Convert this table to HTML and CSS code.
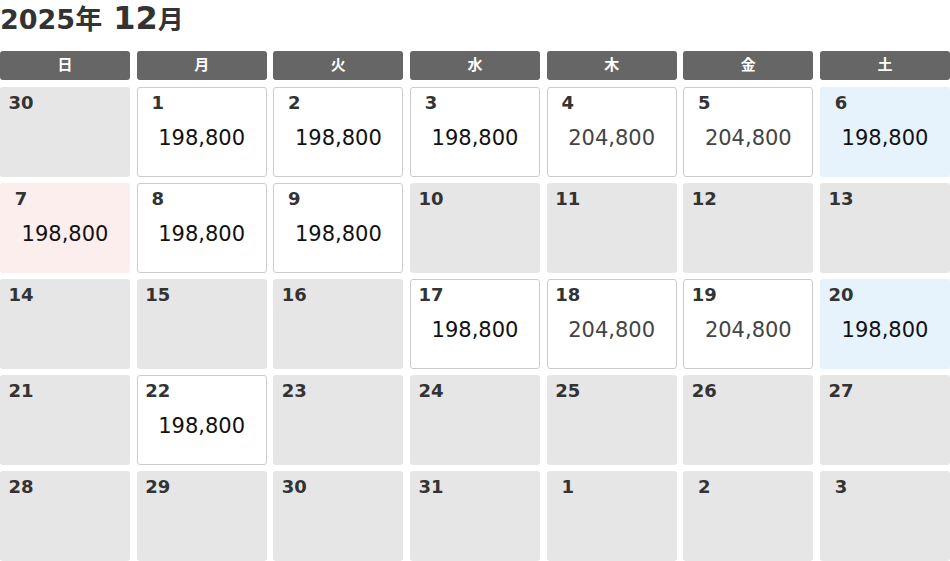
FILE: index.html
```html
<!DOCTYPE html>
<html lang="ja">
<head>
<meta charset="utf-8">
<title>2025年 12月</title>
<link rel="stylesheet" href="styles.css">
</head>
<body>
<div class="cal">
  <h1 class="title"><span class="year">2025年</span> <span class="month">12</span><span class="mon-unit">月</span></h1>
  <div class="grid">
    <div class="hd">日</div><div class="hd">月</div><div class="hd">火</div><div class="hd">水</div><div class="hd">木</div><div class="hd">金</div><div class="hd">土</div>

    <div class="cell off"><div class="day">30</div></div>
    <div class="cell open"><div class="day">1</div><div class="price">198,800</div></div>
    <div class="cell open"><div class="day">2</div><div class="price">198,800</div></div>
    <div class="cell open"><div class="day">3</div><div class="price">198,800</div></div>
    <div class="cell open"><div class="day">4</div><div class="price high">204,800</div></div>
    <div class="cell open"><div class="day">5</div><div class="price high">204,800</div></div>
    <div class="cell sat"><div class="day">6</div><div class="price">198,800</div></div>

    <div class="cell sun"><div class="day">7</div><div class="price">198,800</div></div>
    <div class="cell open"><div class="day">8</div><div class="price">198,800</div></div>
    <div class="cell open"><div class="day">9</div><div class="price">198,800</div></div>
    <div class="cell off"><div class="day">10</div></div>
    <div class="cell off"><div class="day">11</div></div>
    <div class="cell off"><div class="day">12</div></div>
    <div class="cell off"><div class="day">13</div></div>

    <div class="cell off"><div class="day">14</div></div>
    <div class="cell off"><div class="day">15</div></div>
    <div class="cell off"><div class="day">16</div></div>
    <div class="cell open"><div class="day">17</div><div class="price">198,800</div></div>
    <div class="cell open"><div class="day">18</div><div class="price high">204,800</div></div>
    <div class="cell open"><div class="day">19</div><div class="price high">204,800</div></div>
    <div class="cell sat"><div class="day">20</div><div class="price">198,800</div></div>

    <div class="cell off"><div class="day">21</div></div>
    <div class="cell open"><div class="day">22</div><div class="price">198,800</div></div>
    <div class="cell off"><div class="day">23</div></div>
    <div class="cell off"><div class="day">24</div></div>
    <div class="cell off"><div class="day">25</div></div>
    <div class="cell off"><div class="day">26</div></div>
    <div class="cell off"><div class="day">27</div></div>

    <div class="cell off"><div class="day">28</div></div>
    <div class="cell off"><div class="day">29</div></div>
    <div class="cell off"><div class="day">30</div></div>
    <div class="cell off"><div class="day">31</div></div>
    <div class="cell off"><div class="day">1</div></div>
    <div class="cell off"><div class="day">2</div></div>
    <div class="cell off"><div class="day">3</div></div>
  </div>
</div>
</body>
</html>
```

FILE: styles.css
```css
* { box-sizing: border-box; }
html, body { margin: 0; padding: 0; background: #fff; }
body {
  font-family: "DejaVu Sans", Verdana, "Noto Sans CJK JP", sans-serif;
  color: #333;
}
.cal { width: 950px; }
.title {
  margin: 0;
  height: 51px;
  font-weight: bold;
  color: #333;
  line-height: 36px;
  white-space: nowrap;
}
.year { font-size: 27px; }
.month { font-size: 32px; }
.mon-unit { font-size: 26px; }
.grid {
  display: grid;
  grid-template-columns: repeat(7, 1fr);
  grid-template-rows: 30px;
  grid-auto-rows: 90px;
  column-gap: 6.67px;
  row-gap: 6px;
}
.hd {
  height: 29px;
  background: #666;
  color: #fff;
  border-radius: 3px;
  font-weight: bold;
  font-size: 15px;
  text-align: center;
  line-height: 29px;
}
.cell {
  border-radius: 3px;
  padding-top: 5px;
}
.off { background: #e6e6e6; }
.open { background: #fff; border: 1px solid #ccc; padding-top: 4px; }
.sat { background: #e6f3fd; }
.sun { background: #fdeeee; }
.open .day { margin-left: -1px; }
.day {
  width: 42px;
  text-align: center;
  font-weight: bold;
  font-size: 18px;
  line-height: 21px;
  color: #333;
}
.price {
  margin-top: 13px;
  text-align: center;
  font-size: 21px;
  line-height: 25px;
  color: #111;
}
.open .price { margin-left: -1px; margin-right: -1px; }
.price.high { color: #444; }
```
